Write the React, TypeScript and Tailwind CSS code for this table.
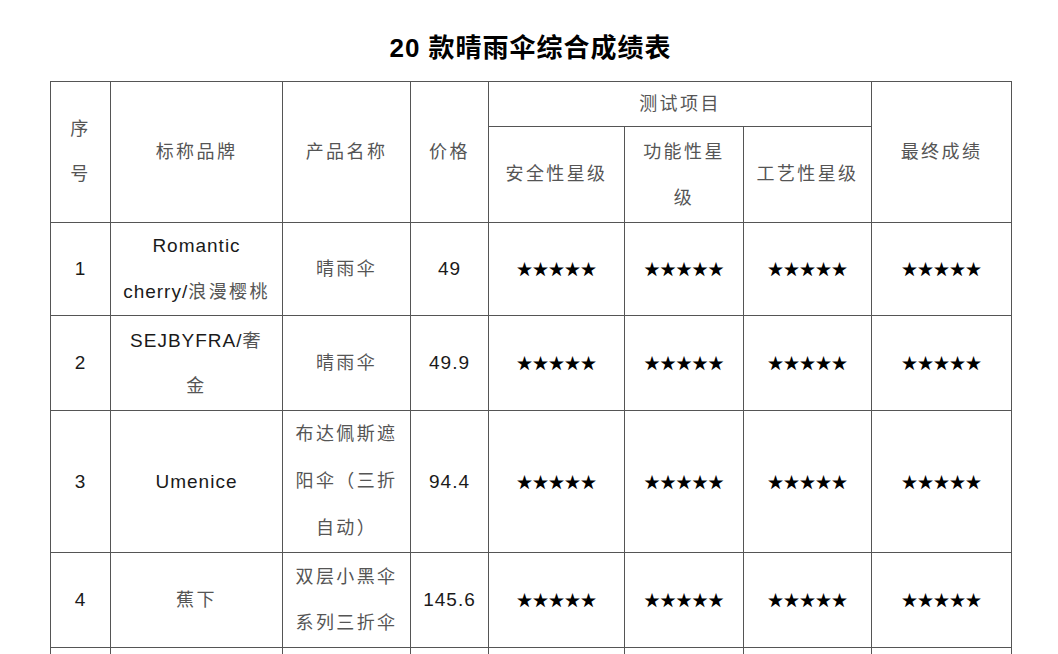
export default function App() {
  const cjk = 'text-[#555] text-[18px] tracking-[2.4px]'
  const lat = 'text-[#1a1a1a] text-[19px] tracking-[1px]'
  const cell = 'border border-[#555] p-0 text-center align-middle whitespace-nowrap'
  const stars = (
    <span className="font-['Noto_Sans_CJK_SC',sans-serif] text-[16px] text-black">★★★★★</span>
  )

  const rows = [
    {
      no: '1',
      brand: (
        <>
          <span className={lat}>Romantic</span>
          <br />
          <span className={lat}>cherry/</span>
          <span className={cjk}>浪漫樱桃</span>
        </>
      ),
      name: <span className={cjk}>晴雨伞</span>,
      price: '49',
      h: 'h-[93px]',
      nameLead: '',
    },
    {
      no: '2',
      brand: (
        <>
          <span className={lat}>SEJBYFRA/</span>
          <span className={cjk}>奢</span>
          <br />
          <span className={cjk}>金</span>
        </>
      ),
      name: <span className={cjk}>晴雨伞</span>,
      price: '49.9',
      h: 'h-[95px]',
      nameLead: '',
    },
    {
      no: '3',
      brand: <span className={lat}>Umenice</span>,
      name: (
        <span className={cjk}>
          布达佩斯遮
          <br />
          阳伞（三折
          <br />
          自动）
        </span>
      ),
      price: '94.4',
      h: 'h-[142px]',
      nameLead: 'leading-[47px]',
    },
    {
      no: '4',
      brand: <span className={cjk}>蕉下</span>,
      name: (
        <span className={cjk}>
          双层小黑伞
          <br />
          系列三折伞
        </span>
      ),
      price: '145.6',
      h: 'h-[95px]',
      nameLead: 'leading-[46px]',
    },
  ]

  return (
    <div className="h-screen overflow-hidden bg-white pl-[50px] pt-[32px] font-['Liberation_Sans','Noto_Sans_CJK_SC',sans-serif]">
      <div className="w-[961px]">
        <h1 className="mb-[17px] text-center text-[26px] leading-[32px] font-bold tracking-[1px] text-black">
          20 款晴雨伞综合成绩表
        </h1>

        <table className="w-[961px] table-fixed border-collapse text-[18px] leading-[45px]">
          <colgroup>
            <col className="w-[60px]" />
            <col className="w-[172px]" />
            <col className="w-[128px]" />
            <col className="w-[78px]" />
            <col className="w-[136px]" />
            <col className="w-[119px]" />
            <col className="w-[128px]" />
            <col className="w-[140px]" />
          </colgroup>
          <thead>
            <tr>
              <th rowSpan={2} className={`${cell} font-normal`}>
                <span className={cjk}>
                  序<br />号
                </span>
              </th>
              <th rowSpan={2} className={`${cell} font-normal`}>
                <span className={cjk}>标称品牌</span>
              </th>
              <th rowSpan={2} className={`${cell} font-normal`}>
                <span className={cjk}>产品名称</span>
              </th>
              <th rowSpan={2} className={`${cell} font-normal`}>
                <span className={cjk}>价格</span>
              </th>
              <th colSpan={3} className={`${cell} h-[45px] font-normal leading-[30px]`}>
                <span className={cjk}>测试项目</span>
              </th>
              <th rowSpan={2} className={`${cell} font-normal`}>
                <span className={cjk}>最终成绩</span>
              </th>
            </tr>
            <tr>
              <th className={`${cell} h-[96px] font-normal`}>
                <span className={cjk}>安全性星级</span>
              </th>
              <th className={`${cell} font-normal leading-[46px]`}>
                <span className={cjk}>
                  功能性星
                  <br />级
                </span>
              </th>
              <th className={`${cell} font-normal`}>
                <span className={cjk}>工艺性星级</span>
              </th>
            </tr>
          </thead>
          <tbody>
            {rows.map((r) => (
              <tr key={r.no}>
                <td className={`${cell} ${r.h}`}>
                  <span className={lat}>{r.no}</span>
                </td>
                <td className={cell}>{r.brand}</td>
                <td className={`${cell} ${r.nameLead}`}>{r.name}</td>
                <td className={cell}>
                  <span className={lat}>{r.price}</span>
                </td>
                <td className={cell}>{stars}</td>
                <td className={cell}>{stars}</td>
                <td className={cell}>{stars}</td>
                <td className={cell}>{stars}</td>
              </tr>
            ))}
            <tr>
              <td className={`${cell} h-[95px]`}></td>
              <td className={cell}></td>
              <td className={cell}></td>
              <td className={cell}></td>
              <td className={cell}></td>
              <td className={cell}></td>
              <td className={cell}></td>
              <td className={cell}></td>
            </tr>
          </tbody>
        </table>
      </div>
    </div>
  )
}
